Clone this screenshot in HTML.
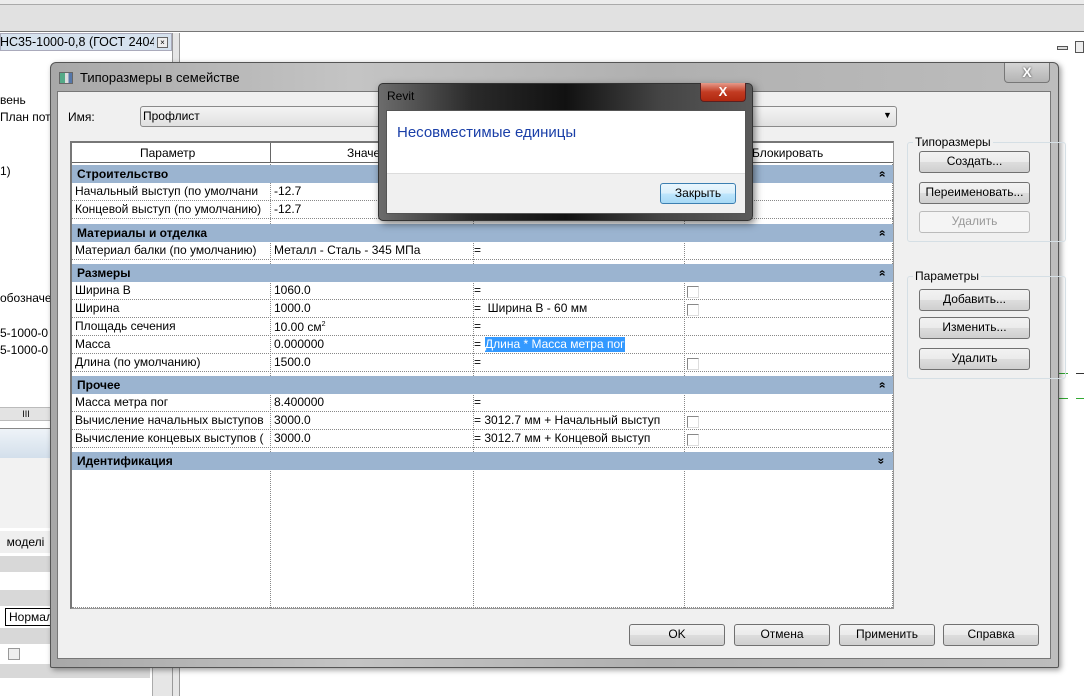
<!DOCTYPE html>
<html><head><meta charset="utf-8"><style>
*{box-sizing:border-box;margin:0;padding:0}
body{width:1084px;height:696px;overflow:hidden;background:#fff;font-family:"Liberation Sans","Noto Sans CJK SC",sans-serif;font-size:12px;color:#000;position:relative}
.a{position:absolute}
.btn{position:absolute;border:1px solid #707070;border-radius:3px;background:linear-gradient(#f2f2f2 0,#ebebeb 50%,#dddddd 51%,#cfcfcf 100%);text-align:center;font-size:12px;line-height:19px}
.grp{position:absolute;background:#9bb4d0;font-weight:bold;padding-left:5px;height:18px;line-height:18px;font-size:12px}
.row{position:absolute;height:18px;line-height:17px;border-bottom:1px dotted #888;font-size:12px;white-space:nowrap;overflow:hidden}
.cb{position:absolute;width:12px;height:12px;border:1px solid #888;border-right-color:#ddd;border-bottom-color:#ddd;background:#fff}
.chev{position:absolute;right:8px;top:0;font-size:12px;font-weight:bold;transform:rotate(-90deg)}
.chev.d{transform:rotate(90deg)}
</style></head><body>
<div class="a" style="left:0;top:0;width:1084px;height:32px;background:#e1e1e1;border-bottom:1px solid #777"></div>
<div class="a" style="left:0;top:0;width:1084px;height:5px;background:#ececec;border-bottom:1px solid #aaa"></div>
<div class="a" style="left:0;top:33px;width:172px;height:18px;background:#d6e2ee;border:1px solid #aab"></div>
<div class="a" style="left:0;top:34px;width:154px;height:16px;font-size:12.5px;line-height:16px;white-space:nowrap;overflow:hidden">НС35-1000-0,8 (ГОСТ 24045...</div>
<div class="a" style="left:157px;top:37px;width:11px;height:11px;border:1px solid #666;font-size:8px;line-height:9px;text-align:center;background:#eee">×</div>
<div class="a" style="left:172px;top:33px;width:8px;height:663px;background:#e6e6e6;border-left:1px solid #999;border-right:1px solid #999"></div>
<div class="a" style="left:0;top:93px">вень</div>
<div class="a" style="left:0;top:110px">План пот</div>
<div class="a" style="left:0;top:164px">1)</div>
<div class="a" style="left:0;top:291px">обозначе</div>
<div class="a" style="left:0;top:326px">5-1000-0</div>
<div class="a" style="left:0;top:343px">5-1000-0</div>
<div class="a" style="left:0;top:407px;width:52px;height:14px;background:#e3e3e3;border-top:1px solid #bbb;border-bottom:1px solid #bbb;font-size:9px;line-height:12px;text-align:center">III</div>
<div class="a" style="left:0;top:428px;width:52px;height:30px;background:linear-gradient(#eef3f8,#d3dfeb);border-top:1px solid #888"></div>
<div class="a" style="left:0;top:458px;width:52px;height:70px;background:#f2f2f2"></div>
<div class="a" style="left:0;top:531px;width:52px;height:22px;background:#efefef;line-height:22px">&nbsp;&nbsp;моделі</div>
<div class="a" style="left:0;top:556px;width:52px;height:16px;background:#d8d8d8"></div>
<div class="a" style="left:0;top:590px;width:52px;height:16px;background:#d8d8d8"></div>
<div class="a" style="left:5px;top:608px;width:50px;height:18px;border:1px solid #000;background:#fff;line-height:16px;padding-left:3px">Нормал</div>
<div class="a" style="left:0;top:628px;width:52px;height:16px;background:#d8d8d8"></div>
<div class="a" style="left:8px;top:648px;width:12px;height:12px;border:1px solid #999;background:#eee"></div>
<div class="a" style="left:0;top:664px;width:150px;height:14px;background:#d8d8d8"></div>
<div class="a" style="left:152px;top:664px;width:20px;height:32px;background:#e6e6e6;border-left:1px solid #aaa"></div>
<div class="a" style="left:1057px;top:46px;width:11px;height:4px;border:1px solid #555;background:#ddd"></div>
<div class="a" style="left:1075px;top:41px;width:9px;height:12px;border:1px solid #555;background:#eee"></div>
<div class="a" style="left:1058px;top:373px;width:10px;height:1px;background:#3a3"></div>
<div class="a" style="left:1076px;top:373px;width:8px;height:1px;background:#333"></div>
<div class="a" style="left:1058px;top:398px;width:10px;height:1px;background:#3a3"></div>
<div class="a" style="left:1076px;top:398px;width:8px;height:1px;background:#3a3"></div>
<div class="a" style="left:50px;top:62px;width:1009px;height:606px;border:1px solid #555;border-radius:6px 6px 2px 2px;background:linear-gradient(90deg,#a8a8a8,#c4c4c4 30%,#b0b0b0 60%,#bdbdbd);box-shadow:2px 2px 6px rgba(0,0,0,.4)"></div>
<div class="a" style="left:59px;top:72px;width:14px;height:12px;background:linear-gradient(90deg,#5a8 0,#5a8 40%,#ddd 40%,#ddd 70%,#57a 70%);border:1px solid #666"></div>
<div class="a" style="left:80px;top:70px;font-size:13px">Типоразмеры в семействе</div>
<div class="a" style="left:1004px;top:63px;width:46px;height:20px;border:1px solid #777;border-top:none;border-radius:0 0 4px 4px;background:linear-gradient(#d4d4d4,#b4b4b4);text-align:center;font-weight:bold;color:#fff;font-size:14px;line-height:19px;text-shadow:0 0 2px #333">X</div>
<div class="a" style="left:57px;top:91px;width:994px;height:568px;background:#f0f0f0;border:1px solid #777"></div>
<div class="a" style="left:68px;top:110px">Имя:</div>
<div class="a" style="left:140px;top:106px;width:757px;height:21px;border:1px solid #8a8a8a;border-radius:3px;background:linear-gradient(#f4f4f4,#e0e0e0);line-height:19px;padding-left:2px">Профлист</div>
<div class="a" style="left:883px;top:110px;font-size:9px">▼</div>
<div class="a" style="left:70px;top:141px;width:824px;height:468px;background:#fff;border:1px solid #999;border-left:2px solid #777;border-top:2px solid #777"></div>
<div class="a" style="left:72px;top:143px;width:821px;height:20px;background:#fff;border-bottom:1px solid #666"></div>
<div class="a" style="left:270px;top:143px;width:1px;height:20px;background:#666"></div>
<div class="a" style="left:140px;top:146px">Параметр</div>
<div class="a" style="left:347px;top:146px">Значение</div>
<div class="a" style="left:752px;top:146px">Блокировать</div>
<div class="a" style="left:270px;top:164px;height:444px;border-left:1px dotted #888"></div>
<div class="a" style="left:473px;top:164px;height:444px;border-left:1px dotted #888"></div>
<div class="a" style="left:684px;top:164px;height:444px;border-left:1px dotted #888"></div>
<div class="a" style="left:72px;top:607px;width:820px;border-top:1px dotted #888"></div>
<div class="a" style="left:892px;top:164px;height:444px;border-left:1px dotted #888"></div>

<div class="grp" style="left:72px;top:165px;width:821px">Строительство<span class="chev">»</span></div>
<div class="row" style="left:72px;top:183px;width:821px"><span class="a" style="left:3px">Начальный выступ (по умолчани</span><span class="a" style="left:202px">-12.7</span></div>
<div class="row" style="left:72px;top:201px;width:821px"><span class="a" style="left:3px">Концевой выступ (по умолчанию)</span><span class="a" style="left:202px">-12.7</span></div>
<div class="grp" style="left:72px;top:224px;width:821px">Материалы и отделка<span class="chev">»</span></div>
<div class="row" style="left:72px;top:242px;width:821px"><span class="a" style="left:3px">Материал балки (по умолчанию)</span><span class="a" style="left:202px">Металл - Сталь - 345 МПа</span><span class="a" style="left:402px">=</span></div>
<div class="grp" style="left:72px;top:264px;width:821px">Размеры<span class="chev">»</span></div>
<div class="row" style="left:72px;top:282px;width:821px"><span class="a" style="left:3px">Ширина В</span><span class="a" style="left:202px">1060.0</span><span class="a" style="left:402px">=</span></div>
<div class="row" style="left:72px;top:300px;width:821px"><span class="a" style="left:3px">Ширина</span><span class="a" style="left:202px">1000.0</span><span class="a" style="left:402px">=&nbsp; Ширина В - 60 мм</span></div>
<div class="row" style="left:72px;top:318px;width:821px"><span class="a" style="left:3px">Площадь сечения</span><span class="a" style="left:202px;top:-2px">10.00 см<sup style="font-size:7px">2</sup></span><span class="a" style="left:402px">=</span></div>
<div class="row" style="left:72px;top:336px;width:821px"><span class="a" style="left:3px">Масса</span><span class="a" style="left:202px">0.000000</span><span class="a" style="left:402px">=&nbsp;</span><span class="a" style="left:413px;top:1px;height:15px;line-height:15px;background:#3399ff;color:#fff">Длина * Масса метра пог</span></div>
<div class="row" style="left:72px;top:354px;width:821px"><span class="a" style="left:3px">Длина (по умолчанию)</span><span class="a" style="left:202px">1500.0</span><span class="a" style="left:402px">=</span></div>
<div class="grp" style="left:72px;top:376px;width:821px">Прочее<span class="chev">»</span></div>
<div class="row" style="left:72px;top:394px;width:821px"><span class="a" style="left:3px">Масса метра пог</span><span class="a" style="left:202px">8.400000</span><span class="a" style="left:402px">=</span></div>
<div class="row" style="left:72px;top:412px;width:821px"><span class="a" style="left:3px">Вычисление начальных выступов</span><span class="a" style="left:202px">3000.0</span><span class="a" style="left:402px">= 3012.7 мм + Начальный выступ</span></div>
<div class="row" style="left:72px;top:430px;width:821px"><span class="a" style="left:3px">Вычисление концевых выступов (</span><span class="a" style="left:202px">3000.0</span><span class="a" style="left:402px">= 3012.7 мм + Концевой выступ</span></div>
<div class="grp" style="left:72px;top:452px;width:821px">Идентификация<span class="chev d">»</span></div>
<div class="cb" style="left:687px;top:286px"></div>
<div class="cb" style="left:687px;top:304px"></div>
<div class="cb" style="left:687px;top:358px"></div>
<div class="cb" style="left:687px;top:416px"></div>
<div class="cb" style="left:687px;top:434px"></div>
<div class="a" style="left:907px;top:142px;width:159px;height:100px;border:1px solid #d5dfe5;border-radius:3px"></div>
<div class="a" style="left:913px;top:135px;background:#f0f0f0;padding:0 2px">Типоразмеры</div>
<div class="btn" style="left:919px;top:151px;width:111px;height:22px">Создать...</div>
<div class="btn" style="left:919px;top:182px;width:111px;height:22px">Переименовать...</div>
<div class="btn" style="left:919px;top:211px;width:111px;height:22px;border-color:#bbb;background:#f4f4f4;color:#999">Удалить</div>
<div class="a" style="left:907px;top:276px;width:159px;height:103px;border:1px solid #d5dfe5;border-radius:3px"></div>
<div class="a" style="left:913px;top:269px;background:#f0f0f0;padding:0 2px">Параметры</div>
<div class="btn" style="left:919px;top:289px;width:111px;height:22px">Добавить...</div>
<div class="btn" style="left:919px;top:317px;width:111px;height:22px">Изменить...</div>
<div class="btn" style="left:919px;top:348px;width:111px;height:22px">Удалить</div>
<div class="btn" style="left:629px;top:624px;width:96px;height:22px">OK</div>
<div class="btn" style="left:734px;top:624px;width:96px;height:22px">Отмена</div>
<div class="btn" style="left:839px;top:624px;width:96px;height:22px">Применить</div>
<div class="btn" style="left:943px;top:624px;width:96px;height:22px">Справка</div>
<div class="a" style="left:378px;top:83px;width:375px;height:138px;border:1px solid #333;border-radius:5px;background:linear-gradient(90deg,#6c6c6c 0,#2a2a2a 25%,#111 50%,#444 75%,#5a5a5a);box-shadow:2px 3px 8px rgba(0,0,0,.5)"></div>
<div class="a" style="left:387px;top:89px">Revit</div>
<div class="a" style="left:700px;top:83px;width:46px;height:19px;border:1px solid #5a2020;border-top:none;border-radius:0 0 4px 4px;background:linear-gradient(#e69a8a,#c23b22 50%,#b02810);text-align:center;color:#fff;font-weight:bold;font-size:13px;line-height:18px">X</div>
<div class="a" style="left:386px;top:110px;width:360px;height:104px;background:#f0f0f0;border:1px solid #555"></div>
<div class="a" style="left:387px;top:111px;width:358px;height:63px;background:#fff;border-bottom:1px solid #dcdcdc"></div>
<div class="a" style="left:397px;top:124px;font-size:15px;color:#1a3fa8">Несовместимые единицы</div>
<div class="btn" style="left:660px;top:183px;width:76px;height:21px;border-color:#3c7fb1;background:linear-gradient(#eaf6fd,#d9f0fc 50%,#bee6fd 51%,#a7d9f5)">Закрыть</div>
</body></html>
